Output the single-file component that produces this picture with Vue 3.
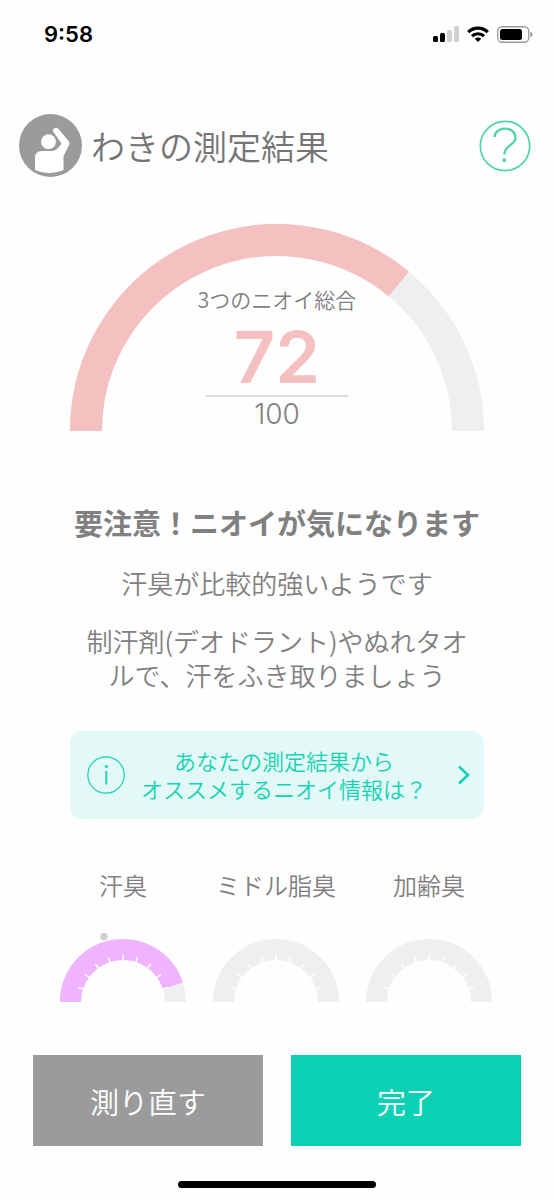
<script setup>
const score = 72
const total = 100

const polar = (cx, cy, r, ratio) => {
  const a = Math.PI * (1 - ratio)
  return [cx + r * Math.cos(a), cy - r * Math.sin(a)]
}

const arc = (cx, cy, r, ratio) => {
  const [x, y] = polar(cx, cy, r, ratio)
  return `M${cx - r} ${cy} A${r} ${r} 0 0 1 ${x.toFixed(2)} ${y.toFixed(2)}`
}

const ticks = Array.from({ length: 9 }, (_, i) => {
  const [x1, y1] = polar(63, 70, 40, (i + 1) / 10)
  const [x2, y2] = polar(63, 70, 47, (i + 1) / 10)
  return { x1, y1, x2, y2 }
})

const odors = [
  { name: '汗臭', level: 0.9, marker: true },
  { name: 'ミドル脂臭', level: 0, marker: false },
  { name: '加齢臭', level: 0, marker: false },
]
</script>

<template>
  <div class="screen">
    <div class="status">
      <span class="time">9:58</span>
      <div class="indicators">
        <svg width="26" height="16" viewBox="0 0 26 16" aria-hidden="true">
          <rect x="0" y="10" width="5" height="6" rx="1.5" />
          <rect x="7" y="7" width="5" height="9" rx="1.5" />
          <rect x="14" y="4" width="5" height="12" rx="1.5" fill="#d0d0d0" />
          <rect x="21" y="0" width="5" height="16" rx="1.5" fill="#d0d0d0" />
        </svg>
        <svg width="22" height="16" viewBox="0 0 22 16" aria-hidden="true">
          <g fill="none" stroke="#000" stroke-width="3.2">
            <path d="M1.2 6.2a14 14 0 0 1 19.6 0" />
            <path d="M5 10.2a8.6 8.6 0 0 1 12 0" />
          </g>
          <path d="M7.8 12.8a4.6 4.6 0 0 1 6.4 0L11 16Z" />
        </svg>
        <svg width="36" height="17" viewBox="0 0 36 17" aria-hidden="true">
          <rect x=".75" y=".75" width="31" height="15.5" rx="4.5" fill="none" stroke="#999" stroke-width="1.3" />
          <rect x="3" y="3" width="22" height="11" rx="2.5" />
          <path d="M33.5 5.8c2.4.8 2.4 4.6 0 5.4Z" fill="#888" />
        </svg>
      </div>
    </div>

    <header class="header">
      <svg class="part" width="63" height="63" viewBox="0 0 63 63" aria-hidden="true">
        <circle cx="31.5" cy="31.5" r="31.5" fill="#9b9b9b" />
        <circle cx="29.5" cy="27.7" r="7.4" fill="#fff" />
        <path d="M16 56V44q0-7 7-7h8c6 0 7.500-2 11.500-7.500L34.600 18.200q-1.500-2.400.7-4 2.400-1.400 4.200.7L49.600 27q1.700 2 .6 4L44.500 42V56Q30 62.500 16 56Z" fill="#fff" />
      </svg>
      <h1 class="title">わきの測定結果</h1>
      <button class="help" type="button" aria-label="ヘルプ">
        <svg width="52" height="52" viewBox="0 0 52 52" fill="none" stroke="#4fd3ab" aria-hidden="true">
          <circle cx="26" cy="26" r="24.700" stroke-width="1.700" />
          <path d="M15.500 17C16 5.800 36.500 5.800 36.500 17.500C36.500 25.500 25.300 25 25.300 34.500" stroke-width="2.300" />
          <rect x="23.600" y="38.500" width="3.400" height="3.400" fill="#4fd3ab" stroke="none" />
        </svg>
      </button>
    </header>

    <main class="content">
      <section class="gauge">
        <svg class="dial" viewBox="0 0 414 207" fill="none" stroke-width="32" aria-hidden="true">
          <path :d="arc(207, 207, 191, 1)" stroke="#efefef" />
          <path :d="arc(207, 207, 191, score / total)" stroke="#f4c0c0" />
        </svg>
        <div class="reading">
          <span class="caption">3つのニオイ総合</span>
          <strong class="score">{{ score }}</strong>
          <span class="total">{{ total }}</span>
        </div>
      </section>

      <h2 class="verdict">要注意！ニオイが気になります</h2>
      <p class="advice">汗臭が比較的強いようです</p>
      <p class="advice">制汗剤(デオドラント)やぬれタオ<br>ルで、汗をふき取りましょう</p>

      <a class="recommend" href="#">
        <svg width="38" height="38" viewBox="0 0 38 38" fill="none" stroke="#13d3b2" aria-hidden="true">
          <circle cx="19" cy="19" r="18.200" stroke-width="1.200" />
          <path d="M19.300 15V28.500" stroke-width="1.900" />
          <circle cx="19.300" cy="10.500" r="1.600" fill="#13d3b2" stroke="none" />
        </svg>
        <span class="recommend-text">あなたの測定結果から<br>オススメするニオイ情報は？</span>
        <svg class="chevron" width="14" height="20" viewBox="0 0 14 20" fill="none" stroke="#13d3b2" stroke-width="2.600" aria-hidden="true">
          <path d="M2 1.500 11 10 2 18.500" />
        </svg>
      </a>
    </main>

    <section class="odors">
      <div v-for="odor in odors" :key="odor.name" class="odor">
        <h3 class="odor-name">{{ odor.name }}</h3>
        <svg class="mini" viewBox="0 0 126 70" fill="none" stroke-width="21" aria-hidden="true">
          <path :d="arc(63, 70, 52.5, 1)" stroke="#efefef" />
          <path v-if="odor.level" :d="arc(63, 70, 52.5, odor.level)" stroke="#f0b3ff" />
          <line v-for="(t, i) in ticks" :key="i" v-bind="t" stroke="#fff" stroke-width="1.500" />
          <circle v-if="odor.marker" cx="44" cy="4.500" r="3.700" fill="#d0d0d0" />
        </svg>
      </div>
    </section>

    <footer class="actions">
      <button class="action retry" type="button">測り直す</button>
      <button class="action done" type="button">完了</button>
    </footer>
    <div class="home-bar"></div>
  </div>
</template>

<style>
body {
  margin: 0;
  background: #fefefe;
}
</style>

<style scoped>
.screen {
  display: flex;
  flex-direction: column;
  padding-bottom: 12px;
  color: #808080;
  font-family: "Noto Sans CJK JP", sans-serif;
  font-weight: 350;
}

h1,
h2,
h3,
p {
  margin: 0;
  font-weight: 350;
}

svg {
  display: block;
  flex: none;
}

button {
  padding: 0;
  border: 0;
  font: inherit;
  cursor: pointer;
}

.status {
  display: flex;
  align-items: center;
  justify-content: space-between;
  height: 68px;
  padding: 0 21px 0 44px;
}

.time {
  color: #000;
  font: 600 22px/28px Inter, sans-serif;
}

.indicators {
  display: flex;
  align-items: center;
  gap: 8px;
}

.header {
  display: flex;
  align-items: center;
  margin-top: 46px;
  padding: 0 23px 0 19px;
}

.title {
  flex: 1;
  margin-left: 9px;
  font-size: 34px;
  line-height: 40px;
  color: #757575;
}

.help {
  background: none;
}

.content {
  display: flex;
  flex-direction: column;
  padding: 0 70px;
  text-align: center;
}

.gauge {
  display: grid;
  margin-top: 47px;
}

.dial,
.reading {
  grid-area: 1 / 1;
  width: 100%;
}

.reading {
  display: flex;
  flex-direction: column;
  align-items: center;
  align-self: end;
}

.caption {
  font-size: 21px;
  line-height: 28px;
}

.score {
  width: 142px;
  padding-top: 6px;
  border-bottom: 2px solid #dcdcdc;
  color: #f4c0c0;
  font: 600 72px/76px Inter, sans-serif;
}

.total {
  font: 300 28px/34px Inter, sans-serif;
}

.verdict {
  margin-top: 71px;
  font-size: 29px;
  font-weight: 700;
  line-height: 40px;
  white-space: nowrap;
}

.advice {
  margin-top: 24px;
  font-size: 26px;
  line-height: 34px;
  white-space: nowrap;
}

.recommend {
  display: flex;
  align-items: center;
  gap: 16px;
  min-height: 88px;
  margin-top: 39px;
  padding: 0 13px 0 17px;
  border-radius: 12px;
  background: #e3f9f7;
  color: #13d3b2;
  text-decoration: none;
}

.recommend-text {
  padding-top: 4px;
  font-family: "Liberation Sans", "Noto Sans CJK JP", sans-serif;
  font-size: 22px;
  line-height: 28px;
  white-space: nowrap;
}

.chevron {
  margin-left: auto;
}

.odors {
  display: flex;
  justify-content: space-between;
  margin-top: 50px;
  padding: 0 62px 0 60px;
}

.odor {
  display: flex;
  flex-direction: column;
  align-items: center;
  width: 126px;
}

.odor-name {
  font-size: 24px;
  line-height: 32px;
  white-space: nowrap;
}

.mini {
  width: 100%;
  margin-top: 31px;
}

.actions {
  display: grid;
  grid-template-columns: 1fr 1fr;
  gap: 28px;
  margin-top: 53px;
  padding: 0 33px;
}

.action {
  height: 91px;
  color: #fff;
  font-size: 29px;
  line-height: 40px;
}

.retry {
  background: #9b9b9b;
}

.done {
  background: #0bd1b4;
}

.home-bar {
  align-self: center;
  width: 198px;
  height: 7px;
  margin-top: 35px;
  border-radius: 4px;
  background: #000;
}
</style>
